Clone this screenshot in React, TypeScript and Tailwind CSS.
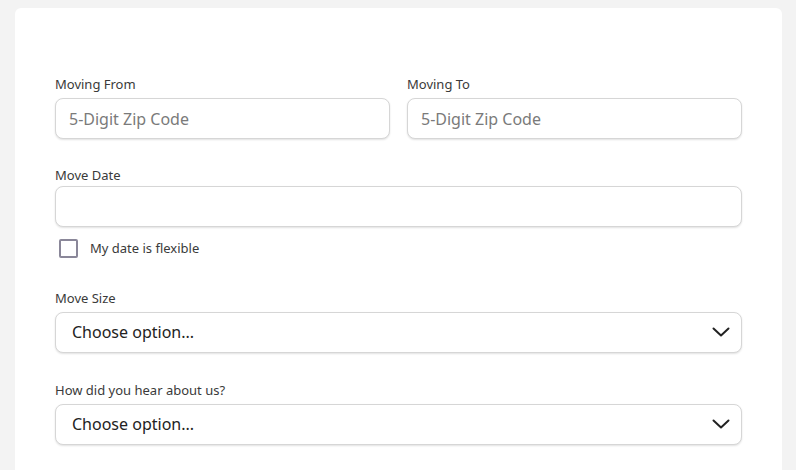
import React, { useState } from 'react';

const fieldClass =
  'w-full h-[41px] rounded-lg border border-[#d6d6d6] bg-white px-[13px] text-[16px] text-[#222] placeholder:text-[#7a7a7a] shadow-[0_1px_2px_rgba(0,0,0,0.12)] focus:outline-none';

const Label: React.FC<{ children: React.ReactNode; tight?: boolean }> = ({ children, tight }) => (
  <label className={`block text-[13px] leading-[18px] text-[#3a3a3a] ${tight ? 'mb-[2px]' : 'mb-[5px]'}`}>
    {children}
  </label>
);

const Chevron = () => (
  <svg width="18" height="10" viewBox="0 0 18 10" fill="none" className="shrink-0">
    <path d="M1.5 1.5L9 8.5L16.5 1.5" stroke="#222" strokeWidth="2" strokeLinecap="round" strokeLinejoin="round" />
  </svg>
);

const FakeSelect: React.FC<{ value: string }> = ({ value }) => (
  <div className="flex h-[41px] w-full items-center justify-between rounded-lg border border-[#d6d6d6] bg-white pl-[16px] pr-[11px] shadow-[0_1px_2px_rgba(0,0,0,0.12)]">
    <span className="text-[16px] text-[#222]">{value}</span>
    <Chevron />
  </div>
);

const App: React.FC = () => {
  const [flexible, setFlexible] = useState(false);

  return (
    <div
      className="min-h-[470px] bg-[#f3f3f3] pl-[15px] pr-[14px] pt-[8px] overflow-hidden"
      style={{ fontFamily: '"Noto Sans", "Open Sans", sans-serif' }}
    >
      <div className="h-[480px] rounded-md bg-white px-[40px] pt-[67px]">
        <div className="grid grid-cols-2 gap-x-[17px]">
          <div>
            <Label>Moving From</Label>
            <input className={fieldClass} placeholder="5-Digit Zip Code" />
          </div>
          <div>
            <Label>Moving To</Label>
            <input className={fieldClass} placeholder="5-Digit Zip Code" />
          </div>
        </div>

        <div className="mt-[27px]">
          <Label tight>Move Date</Label>
          <input className={fieldClass} />
        </div>

        <label className="mt-[12px] flex items-center gap-[12px] pl-[4px] cursor-pointer">
          <span
            onClick={() => setFlexible(!flexible)}
            className="h-[19px] w-[19px] rounded-[2px] border-2 border-[#8a8799] bg-white"
          />
          <span className="text-[13px] text-[#3a3a3a]">My date is flexible</span>
        </label>

        <div className="mt-[30px]">
          <Label>Move Size</Label>
          <FakeSelect value="Choose option..." />
        </div>

        <div className="mt-[28px]">
          <Label>How did you hear about us?</Label>
          <FakeSelect value="Choose option..." />
        </div>
      </div>
    </div>
  );
};

export default App;
